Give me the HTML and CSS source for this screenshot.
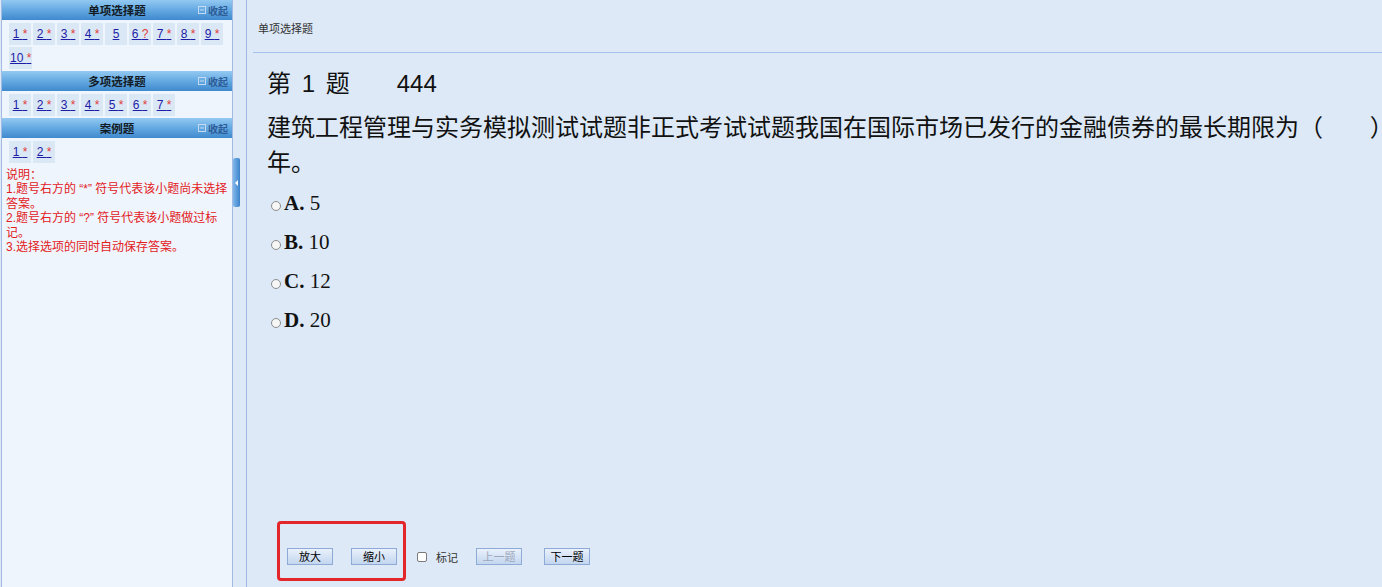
FILE: index.html
```html
<!DOCTYPE html>
<html lang="zh-CN">
<head>
<meta charset="utf-8">
<title>单项选择题</title>
<link rel="stylesheet" href="styles.css">
</head>
<body>
<div class="page">
  <aside class="sidebar">
    <section class="group">
      <div class="group-head">
        <span class="group-title">单项选择题</span>
        <span class="collapse"><svg class="collapse-icon" width="8" height="8" viewBox="0 0 8 8"><rect x="0.5" y="0.5" width="7" height="7" fill="none" stroke="#c3daf2"/><line x1="2" y1="4" x2="6" y2="4" stroke="#c3daf2"/></svg>收起</span>
      </div>
      <div class="group-body">
        <span class="cell"><a href="#">1 <em>*</em></a></span>
        <span class="cell"><a href="#">2 <em>*</em></a></span>
        <span class="cell"><a href="#">3 <em>*</em></a></span>
        <span class="cell"><a href="#">4 <em>*</em></a></span>
        <span class="cell"><a href="#">5 </a></span>
        <span class="cell"><a href="#">6 <em>?</em></a></span>
        <span class="cell"><a href="#">7 <em>*</em></a></span>
        <span class="cell"><a href="#">8 <em>*</em></a></span>
        <span class="cell"><a href="#">9 <em>*</em></a></span>
        <span class="cell"><a href="#">10 <em>*</em></a></span>
      </div>
    </section>
    <section class="group">
      <div class="group-head">
        <span class="group-title">多项选择题</span>
        <span class="collapse"><svg class="collapse-icon" width="8" height="8" viewBox="0 0 8 8"><rect x="0.5" y="0.5" width="7" height="7" fill="none" stroke="#c3daf2"/><line x1="2" y1="4" x2="6" y2="4" stroke="#c3daf2"/></svg>收起</span>
      </div>
      <div class="group-body">
        <span class="cell"><a href="#">1 <em>*</em></a></span>
        <span class="cell"><a href="#">2 <em>*</em></a></span>
        <span class="cell"><a href="#">3 <em>*</em></a></span>
        <span class="cell"><a href="#">4 <em>*</em></a></span>
        <span class="cell"><a href="#">5 <em>*</em></a></span>
        <span class="cell"><a href="#">6 <em>*</em></a></span>
        <span class="cell"><a href="#">7 <em>*</em></a></span>
      </div>
    </section>
    <section class="group">
      <div class="group-head">
        <span class="group-title">案例题</span>
        <span class="collapse"><svg class="collapse-icon" width="8" height="8" viewBox="0 0 8 8"><rect x="0.5" y="0.5" width="7" height="7" fill="none" stroke="#c3daf2"/><line x1="2" y1="4" x2="6" y2="4" stroke="#c3daf2"/></svg>收起</span>
      </div>
      <div class="group-body">
        <span class="cell"><a href="#">1 <em>*</em></a></span>
        <span class="cell"><a href="#">2 <em>*</em></a></span>
      </div>
    </section>
    <div class="notes">
      <div>说明：</div>
      <div>1.题号右方的 “*” 符号代表该小题尚未选择答案。</div>
      <div>2.题号右方的 “?” 符号代表该小题做过标记。</div>
      <div>3.选择选项的同时自动保存答案。</div>
    </div>
  </aside>
  <div class="splitter"><span class="split-btn"></span></div>
  <main class="main">
    <div class="main-head">单项选择题</div>
    <div class="content">
      <div class="q-title"><span>第 1 题</span><span class="q-score">444</span></div>
      <div class="q-text">建筑工程管理与实务模拟测试试题非正式考试试题我国在国际市场已发行的金融债券的最长期限为（&nbsp;&nbsp;&nbsp;&nbsp;&nbsp;&nbsp;&nbsp;）年。</div>
      <div class="options">
        <label class="option"><input type="radio" name="q1"><b>A.</b>&nbsp;5</label>
        <label class="option"><input type="radio" name="q1"><b>B.</b>&nbsp;10</label>
        <label class="option"><input type="radio" name="q1"><b>C.</b>&nbsp;12</label>
        <label class="option"><input type="radio" name="q1"><b>D.</b>&nbsp;20</label>
      </div>
    </div>
    <div class="toolbar">
      <button class="btn" type="button">放大</button>
      <button class="btn gap18" type="button">缩小</button>
      <label class="mark"><input type="checkbox">标记</label>
      <button class="btn gap18" type="button" disabled>上一题</button>
      <button class="btn gap22" type="button">下一题</button>
    </div>
    <div class="highlight"></div>
  </main>
</div>
</body>
</html>
```

FILE: styles.css
```css
html, body {
  margin: 0;
  padding: 0;
}

body {
  font-family: "Liberation Sans", "Noto Sans CJK SC", sans-serif;
  background: #dde9f6;
  overflow: hidden;
}

.page {
  display: flex;
  height: 587px;
}

/* ---------- sidebar ---------- */
.sidebar {
  flex: none;
  width: 230px;
  margin-left: 1px;
  border-left: 1px solid #a3bbe3;
  border-right: 1px solid #a3bbe3;
  background: #eef5fd;
}

.group-head {
  height: 20px;
  display: grid;
  grid-template-columns: 1fr auto 1fr;
  align-items: center;
  background: linear-gradient(#93c9f1, #64a9e2 50%, #3f89cd);
}

.group-title {
  grid-column: 2;
  font-family: "Noto Sans CJK SC", sans-serif;
  font-size: 11.5px;
  font-weight: bold;
  color: #121a24;
}

.collapse {
  grid-column: 3;
  justify-self: end;
  padding-right: 4px;
  display: flex;
  align-items: center;
  gap: 2px;
  font-family: "Noto Sans CJK SC", sans-serif;
  font-size: 10px;
  font-weight: bold;
  color: #2e5c97;
}

.collapse-icon {
  display: block;
}

.group-body {
  display: flex;
  flex-wrap: wrap;
  gap: 2px;
  padding: 3px 0 2px 7px;
}

.cell {
  box-sizing: border-box;
  min-width: 22px;
  height: 22px;
  padding: 0 1px;
  display: flex;
  align-items: center;
  justify-content: center;
  background: #dae7f5;
}

.cell a {
  font-size: 12px;
  color: #1d1da6;
  text-decoration: underline;
  white-space: nowrap;
}

.cell em {
  font-style: normal;
  color: #e23a3a;
}

.notes {
  margin-top: 3px;
  padding-left: 4px;
  width: 226px;
  font-size: 12px;
  line-height: 14.4px;
  color: #e3201c;
}

/* ---------- splitter ---------- */
.splitter {
  flex: none;
  width: 13px;
  border-right: 1px solid #9fb6e2;
  background: #dde9f6;
  display: flex;
  flex-direction: column;
}

.split-btn {
  margin-top: 158px;
  width: 7px;
  height: 49px;
  border-radius: 2px;
  background: linear-gradient(to right, #80b8ec, #3c82ca);
  display: flex;
  align-items: center;
  justify-content: center;
}

.split-btn::before {
  content: "";
  width: 0;
  height: 0;
  border-style: solid;
  border-width: 3px 3px 3px 0;
  border-color: transparent #ffffff transparent transparent;
}

/* ---------- main ---------- */
.main {
  flex: 1;
  min-width: 0;
  position: relative;
  display: flex;
  flex-direction: column;
  overflow: hidden;
}

.main-head {
  flex: none;
  height: 31px;
  margin-left: 6px;
  padding: 21px 0 0 5px;
  line-height: 14px;
  font-family: "Noto Sans CJK SC", sans-serif;
  font-size: 11px;
  color: #333;
  border-bottom: 1px solid #a7c0ee;
}

.content {
  padding: 13px 0 0 20px;
}

.q-title {
  font-size: 24px;
  line-height: 36px;
  color: #111;
  white-space: nowrap;
  word-spacing: 4px;
}

.q-score {
  margin-left: 47px;
}

.q-text {
  margin-top: 8px;
  width: 1140px;
  font-size: 24px;
  line-height: 35px;
  color: #111;
}

.options {
  margin-top: 4px;
}

.option {
  display: flex;
  align-items: center;
  height: 39px;
  font-family: "Liberation Serif", serif;
  font-size: 21px;
  color: #111;
}

.option input {
  appearance: none;
  -webkit-appearance: none;
  box-sizing: border-box;
  width: 10px;
  height: 10px;
  margin: 5px 3px 0 4px;
  border: 1px solid #8c8c8c;
  border-radius: 50%;
  background: #f6f6f6;
}

/* ---------- toolbar ---------- */
.toolbar {
  margin-top: auto;
  padding: 0 0 22px 40px;
  display: flex;
  align-items: center;
}

.btn {
  box-sizing: border-box;
  width: 46px;
  height: 17px;
  padding: 0;
  border: 1px solid #8eaad6;
  background: linear-gradient(#e9f1fb, #c3d6ef);
  font-family: "Noto Sans CJK SC", sans-serif;
  font-size: 11px;
  line-height: 15px;
  color: #000;
}

.btn:disabled {
  color: #9ea8ba;
}

.gap18 {
  margin-left: 18px;
}

.gap22 {
  margin-left: 22px;
}

.mark {
  margin-left: 20px;
  display: flex;
  align-items: center;
  gap: 9px;
  font-family: "Noto Sans CJK SC", sans-serif;
  font-size: 11px;
  color: #333;
}

.mark input {
  appearance: none;
  -webkit-appearance: none;
  box-sizing: border-box;
  width: 10px;
  height: 10px;
  margin: 0;
  border: 1px solid #7a7a7a;
  border-radius: 2px;
  background: #fff;
}

.highlight {
  position: absolute;
  left: 30px;
  bottom: 6px;
  width: 129px;
  height: 60px;
  box-sizing: border-box;
  border: 3px solid #e3262a;
  border-radius: 4px;
  pointer-events: none;
}
```
